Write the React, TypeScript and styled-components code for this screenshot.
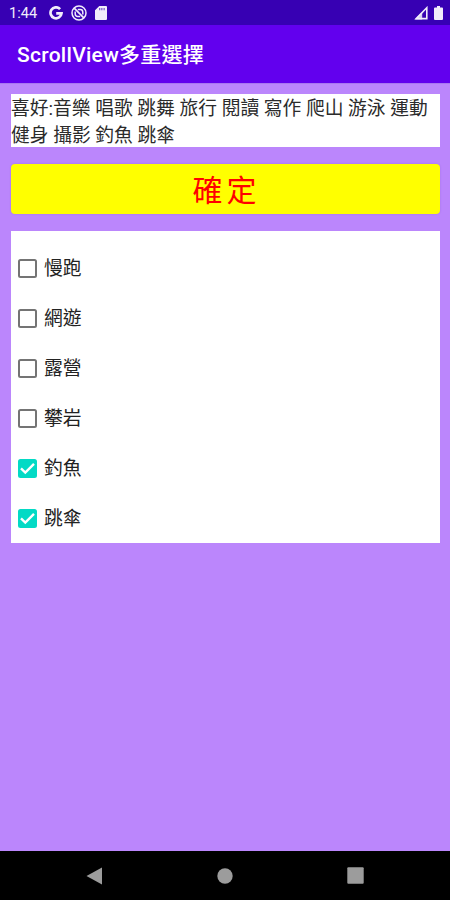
import React, { useState } from "react";
import styled, { createGlobalStyle } from "styled-components";

const GlobalStyle = createGlobalStyle`
  *, *::before, *::after { box-sizing: border-box; }
  html, body { margin: 0; padding: 0; background: #bb86fc; }
  body { font-family: Roboto, "Noto Sans CJK TC", sans-serif; }
`;

const Screen = styled.div`
  width: 450px;
  height: 900px;
  display: flex;
  flex-direction: column;
  overflow: hidden;
  background: #bb86fc;
`;

const StatusBar = styled.header`
  flex: 0 0 25px;
  display: flex;
  align-items: center;
  justify-content: space-between;
  padding: 1px 7px 0 9px;
  background: #3700b3;
  color: #f1ecfb;
`;

const StatusGroup = styled.div<{ $gap: number }>`
  display: flex;
  align-items: center;
  gap: ${(p) => p.$gap}px;
  svg { display: block; }
`;

const Clock = styled.span`
  width: 32px;
  font-size: 14.6px;
  line-height: 24px;
  white-space: nowrap;
`;

const AppBar = styled.div`
  flex: 0 0 58px;
  display: flex;
  align-items: center;
  padding: 2px 17px 0;
  background: #6200ee;
`;

const Title = styled.h1`
  margin: 0;
  font-size: 21px;
  font-weight: 500;
  line-height: 30px;
  letter-spacing: 0.28px;
  color: #fff;
  white-space: nowrap;
`;

const Content = styled.main`
  flex: 1;
  display: flex;
  flex-direction: column;
  padding: 10px 10px 0 11px;
  border-top: 1px solid #a877f0;
`;

const Summary = styled.p`
  margin: 0;
  padding-top: 2px;
  height: 53px;
  font-size: 18.75px;
  line-height: 27px;
  color: #2b2b2b;
  background: #fff;
`;

const ConfirmButton = styled.button`
  margin: 17px 0;
  height: 50px;
  padding: 2px 0 0 2px;
  border: 0;
  border-radius: 4px;
  background: #ff0;
  color: #f00;
  font-family: inherit;
  font-size: 30px;
  line-height: 47px;
  letter-spacing: 4px;
  box-shadow: 0 0 2px rgba(70, 30, 120, 0.2);
`;

const OptionList = styled.div`
  height: 312px;
  padding: 12px 7px 0;
  background: #fff;
`;

const Option = styled.label`
  height: 50px;
  display: flex;
  align-items: center;
  gap: 7px;
`;

const OptionText = styled.span`
  padding-top: 3px;
  font-size: 18.75px;
  line-height: 47px;
  color: #222;
`;

const HiddenInput = styled.input`
  display: none;
`;

const CheckBox = styled.span<{ $checked: boolean }>`
  width: 19px;
  height: 19px;
  flex: none;
  border: 2px solid ${(p) => (p.$checked ? "#03dac5" : "#747474")};
  border-radius: 2.5px;
  background: ${(p) => (p.$checked ? "#03dac5" : "#fff")};
  svg { display: block; margin: -2px; }
`;

const NavBar = styled.nav`
  flex: 0 0 49px;
  display: flex;
  align-items: center;
  justify-content: space-between;
  padding: 0 86px;
  background: #000;
  svg { display: block; }
`;

const GoogleIcon = () => (
  <svg width="14" height="14" viewBox="0 0 14 14" fill="none" stroke="currentColor" strokeWidth="2.7">
    <path d="M11.1 3.1A5.5 5.5 0 1 0 12.5 7.3H7.2" />
  </svg>
);

const BlockedIcon = () => (
  <svg width="16" height="16" viewBox="0 0 16 16" fill="none" stroke="currentColor">
    <circle cx="8" cy="8" r="7" strokeWidth="1.5" />
    <path d="M3.2 3.2l9.6 9.6" strokeWidth="1.7" />
    <path d="M6.8 4.6h2.4a2.6 2.6 0 0 1 2.6 2.6v2.2M9.2 11.4H6.800a2.600 2.600 0 0 1-2.600-2.600V6.600" strokeWidth="1.5" />
  </svg>
);

const StorageIcon = () => (
  <svg width="12" height="14" viewBox="0 0 12 14">
    <path
      fill="currentColor"
      fillRule="evenodd"
      d="M4.3 0H11a1 1 0 0 1 1 1v12a1 1 0 0 1-1 1H1a1 1 0 0 1-1-1V4.3zM4.4 2v2.2h.8V2zM6.5 2v2.2h.8V2zM8.7 2v2.2h.8V2z"
    />
  </svg>
);

const SignalIcon = () => (
  <svg width="14" height="14" viewBox="0 0 14 14">
    <path d="M2.2 12.6L12.8 1.8V12.6z" fill="none" stroke="currentColor" strokeWidth="1.6" />
    <path d="M1 13.4L8.2 6V13.4z" fill="currentColor" opacity=".85" />
  </svg>
);

const BatteryIcon = () => (
  <svg width="9" height="14" viewBox="0 0 9 14" fill="currentColor">
    <path d="M3 0h3v1.5h2a1 1 0 0 1 1 1V13a1 1 0 0 1-1 1H1a1 1 0 0 1-1-1V2.5a1 1 0 0 1 1-1h2z" />
  </svg>
);

const CheckMark = () => (
  <svg width="19" height="19" viewBox="0 0 19 19" fill="none" stroke="#fff" strokeWidth="2.4">
    <path d="M3 9.3l4.3 4.2L16 4.8" />
  </svg>
);

const hobbies = ["音樂", "唱歌", "跳舞", "旅行", "閱讀", "寫作", "爬山", "游泳", "運動", "健身", "攝影"];
const options = ["慢跑", "網遊", "露營", "攀岩", "釣魚", "跳傘"];

export default function App() {
  const [selected, setSelected] = useState<string[]>(["釣魚", "跳傘"]);
  const toggle = (name: string) =>
    setSelected((s) => (s.includes(name) ? s.filter((n) => n !== name) : [...s, name]));
  const chosen = [...hobbies, ...options.filter((o) => selected.includes(o))];

  return (
    <Screen>
      <GlobalStyle />
      <StatusBar>
        <StatusGroup $gap={8}>
          <Clock>1:44</Clock>
          <GoogleIcon />
          <BlockedIcon />
          <StorageIcon />
        </StatusGroup>
        <StatusGroup $gap={6}>
          <SignalIcon />
          <BatteryIcon />
        </StatusGroup>
      </StatusBar>
      <AppBar>
        <Title>ScrollView多重選擇</Title>
      </AppBar>
      <Content>
        <Summary>{"喜好:" + chosen.join(" ")}</Summary>
        <ConfirmButton type="button">確定</ConfirmButton>
        <OptionList>
          {options.map((name) => {
            const checked = selected.includes(name);
            return (
              <Option key={name}>
                <HiddenInput type="checkbox" checked={checked} onChange={() => toggle(name)} />
                <CheckBox $checked={checked}>{checked && <CheckMark />}</CheckBox>
                <OptionText>{name}</OptionText>
              </Option>
            );
          })}
        </OptionList>
      </Content>
      <NavBar>
        <svg width="17" height="18" viewBox="0 0 17 18" fill="#9c9c9c">
          <path d="M0.5 9L16 .5v17z" />
        </svg>
        <svg width="16" height="16" viewBox="0 0 16 16" fill="#9c9c9c">
          <circle cx="8" cy="8" r="7.7" />
        </svg>
        <svg width="17" height="17" viewBox="0 0 17 17" fill="#9c9c9c">
          <rect x=".3" y=".3" width="16.4" height="16.4" rx="1" />
        </svg>
      </NavBar>
    </Screen>
  );
}
